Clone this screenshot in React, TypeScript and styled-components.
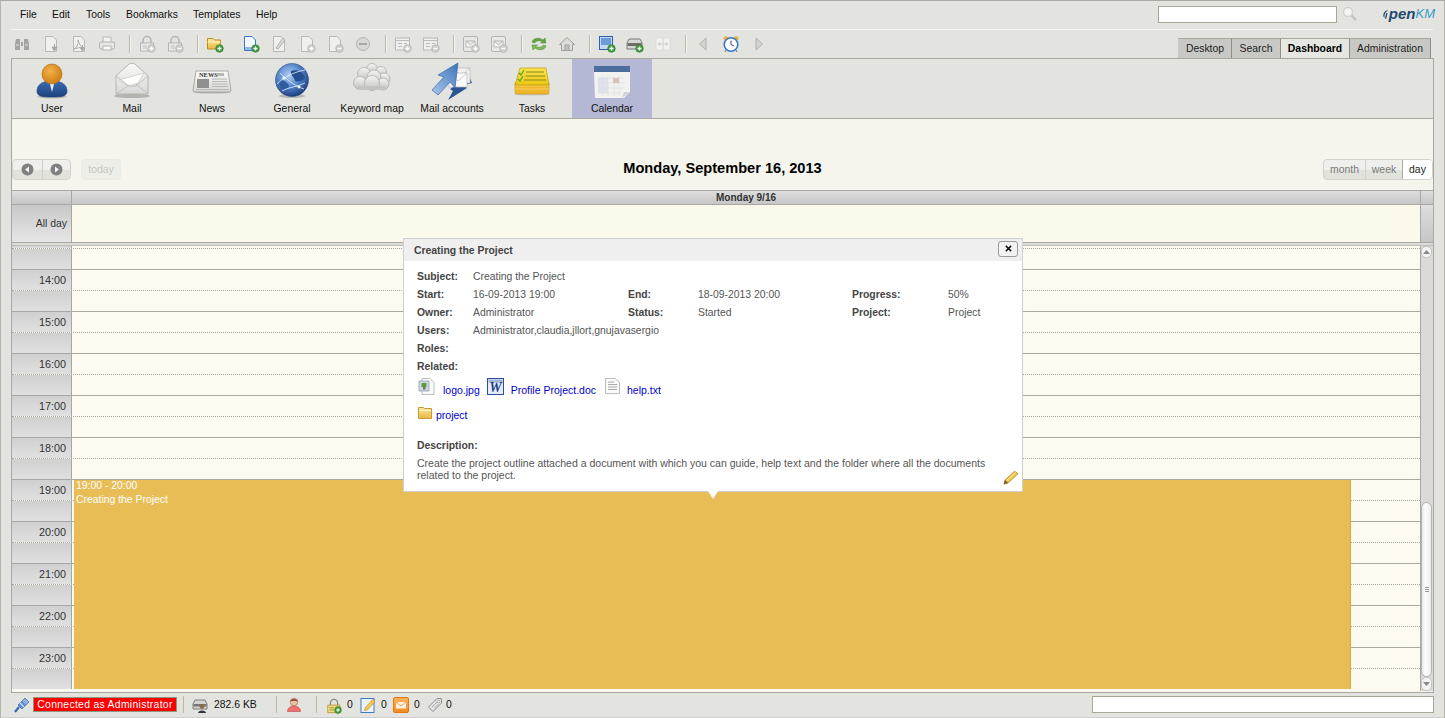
import React from 'react';
import styled, { createGlobalStyle } from 'styled-components';

const GlobalStyle = createGlobalStyle`
  html, body {
    margin: 0;
    padding: 0;
    background: #e3e4df;
    font-family: "Liberation Sans", Arial, sans-serif;
    overflow: hidden;
  }
`;

const Page = styled.div`
  position: relative;
  box-sizing: border-box;
  width: 1445px;
  height: 718px;
  border-top: 1px solid #aaaaa2;
  border-left: 1px solid #b4b4ac;
  border-right: 1px solid #b4b4ac;
  background: #e3e4df;
  display: flex;
  flex-direction: column;
  font-size: 10.4px;
  color: #111;
`;

const MenuBar = styled.div`
  height: 26px;
  padding-bottom: 2px;
  margin: 0 11px 0 10px;
  display: flex;
  align-items: center;
  justify-content: space-between;
  border-bottom: 1px solid #f6f6f2;
  box-sizing: content-box;
`;

const Menus = styled.div`
  display: flex;
  padding-left: 9px;
`;

const MenuItem = styled.span<{ $w: number }>`
  width: ${(p) => p.$w}px;
  color: #111;
`;

const SearchBox = styled.div`
  display: flex;
  align-items: center;
  margin-right: -2px;
`;

const SearchInput = styled.input`
  box-sizing: border-box;
  width: 179px;
  height: 17px;
  margin: 0 5px 0 0;
  padding: 0 3px;
  border: 1px solid #a8a898;
  background: #fff;
`;

const Logo = styled.div`
  display: flex;
  align-items: center;
  width: 52px;
  margin-left: 25px;
  font-style: italic;
  font-weight: bold;
  font-size: 15px;
  line-height: 14px;
  color: #21496f;
`;

const LogoKm = styled.span`
  color: #3d9ac6;
  font-weight: normal;
  font-size: 13px;
`;

const ToolRow = styled.div`
  height: 28px;
  display: flex;
  justify-content: space-between;
  padding: 0 13px 0 7px;
`;

const Tools = styled.div`
  display: flex;
  align-items: center;
  height: 28px;
`;

const Tool = styled.span<{ $ml?: number; $mr?: number }>`
  width: 28px;
  height: 20px;
  display: flex;
  align-items: center;
  justify-content: center;
  margin-left: ${(p) => p.$ml ?? 0}px;
  margin-right: ${(p) => p.$mr ?? 0}px;
`;

const ToolSep = styled.span`
  width: 1px;
  height: 18px;
  margin: 0 3px 0 8px;
  background: #bcb8a8;
  box-shadow: 1px 0 0 #f4f4f0;
`;

const Tabs = styled.div`
  display: flex;
  align-items: flex-end;
  height: 28px;
  margin-bottom: -1px;
`;

const Tab = styled.div<{ $w: number; $on?: boolean }>`
  box-sizing: border-box;
  width: ${(p) => p.$w}px;
  height: 20px;
  display: flex;
  align-items: center;
  justify-content: center;
  border-top: 1px solid #a8a898;
  border-right: 1px solid #8e8e86;
  background: ${(p) => (p.$on ? '#e6e7e2' : '#c8c9c4')};
  font-weight: ${(p) => (p.$on ? 'bold' : 'normal')};
  color: ${(p) => (p.$on ? '#000' : '#222')};
  &:first-child {
    border-left: 1px solid #c8c9c4;
  }
`;

const Panel = styled.div`
  flex: 1;
  min-height: 0;
  margin: 0 10px 0 10px;
  border: 1px solid #a8a99c;
  display: flex;
  flex-direction: column;
`;

const Stack = styled.div`
  height: 59px;
  flex: none;
  display: flex;
  border-bottom: 1px solid #a8a99c;
`;

const StackItem = styled.div<{ $on?: boolean }>`
  width: 80px;
  display: flex;
  flex-direction: column;
  align-items: center;
  padding-top: 2px;
  box-sizing: border-box;
  background: ${(p) => (p.$on ? '#b4b8d4' : 'transparent')};
`;

const StackIcon = styled.span`
  height: 38px;
  display: flex;
  justify-content: center;
`;

const StackLabel = styled.span`
  margin-top: 4px;
  line-height: 12px;
  color: #111;
`;

const CalendarArea = styled.div`
  flex: 1;
  min-height: 0;
  display: flex;
  flex-direction: column;
  padding-top: 40px;
  padding-bottom: 1px;
  background: #f5f5ee;
`;

const CalHead = styled.div`
  height: 21px;
  margin-bottom: 10px;
  display: flex;
  align-items: center;
  justify-content: space-between;
`;

const HeadSide = styled.div`
  width: 140px;
  display: flex;
  align-items: center;
  gap: 10px;
`;

const HeadSideRight = styled(HeadSide)`
  justify-content: flex-end;
`;

const ButtonGroup = styled.div`
  display: flex;
  height: 21px;
  box-sizing: border-box;
  border: 1px solid #d4d4ce;
  border-radius: 4px;
  background: linear-gradient(#efefeb 50%, #e2e2dd 50%);
  overflow: hidden;
`;

const NavButton = styled.span`
  box-sizing: border-box;
  width: 28.5px;
  display: flex;
  align-items: center;
  justify-content: center;
  & + & {
    border-left: 1px solid #cfcfc9;
  }
`;

const ViewButton = styled.span<{ $w: number; $on?: boolean }>`
  box-sizing: border-box;
  width: ${(p) => p.$w}px;
  display: flex;
  align-items: center;
  justify-content: center;
  color: ${(p) => (p.$on ? '#222' : '#7a7a78')};
  background: ${(p) => (p.$on ? '#fff' : 'transparent')};
  border-left: 1px solid ${(p) => (p.$on ? '#a8a8a4' : '#d2d2cc')};
  &:first-child {
    border-left: 0;
  }
`;

const TodayButton = styled.span`
  box-sizing: border-box;
  width: 40px;
  height: 21px;
  display: flex;
  align-items: center;
  justify-content: center;
  border: 1px solid #ebebe5;
  border-radius: 4px;
  background: #eeeee8;
  color: #c6c6bf;
`;

const Title = styled.div`
  font-size: 14.6px;
  font-weight: bold;
  color: #000;
  padding-bottom: 4px;
`;

const Grid = styled.div`
  flex: 1;
  min-height: 0;
  display: flex;
  flex-direction: column;
`;

const cellGradient = 'linear-gradient(#dedede, #c6c6c6)';

const GridHeader = styled.div`
  box-sizing: border-box;
  height: 15px;
  flex: none;
  display: flex;
  border-top: 1px solid #a8a8a2;
  border-bottom: 1px solid #a8a8a2;
  background: ${cellGradient};
`;

const CornerCell = styled.div`
  width: 60px;
  box-sizing: border-box;
  border-right: 1px solid #a8a8a2;
`;

const DayCell = styled.div`
  flex: 1;
  display: flex;
  align-items: center;
  justify-content: center;
  font-size: 10px;
  font-weight: bold;
  color: #333;
`;

const ScrollCorner = styled.div`
  width: 13px;
  box-sizing: border-box;
  border-left: 1px solid #a8a8a2;
`;

const AllDayRow = styled.div`
  height: 37px;
  flex: none;
  display: flex;
`;

const AllDayLabel = styled.div`
  width: 60px;
  box-sizing: border-box;
  padding: 13px 4px 0 0;
  text-align: right;
  border-right: 1px solid #a8a8a2;
  background: linear-gradient(#c8c8c8, #e6e6e6);
  color: #333;
`;

const AllDaySlot = styled.div`
  flex: 1;
  background: #fbf8ec;
`;

const AllDayScroll = styled(ScrollCorner)`
  background: linear-gradient(#dedede, #c6c6c6);
`;

const Divider = styled.div`
  box-sizing: border-box;
  height: 4px;
  flex: none;
  border-top: 1px solid #a8a8a2;
  border-bottom: 1px solid #bdbdb6;
  background: #dcdcd8;
`;

const GridBody = styled.div`
  flex: 1;
  min-height: 0;
  display: flex;
`;

const Rows = styled.div`
  position: relative;
  flex: 1;
  min-width: 0;
  display: flex;
  flex-direction: column;
  overflow: hidden;
  background: #fdfaf2;
`;

const Half = styled.div<{ $h: number; $line?: 'solid' | 'dotted' }>`
  box-sizing: border-box;
  height: ${(p) => p.$h}px;
  flex: none;
  display: flex;
  border-top: ${(p) => (p.$line ? `1px ${p.$line} #a8a8a2` : '0')};
`;

const TimeCell = styled.div`
  width: 60px;
  box-sizing: border-box;
  padding-right: 5px;
  text-align: right;
  line-height: 21px;
  font-size: 10.8px;
  color: #333;
  border-right: 1px solid #a8a8a2;
  background: linear-gradient(#d0d0d0, #e0e0e0);
`;

const EventBlock = styled.div`
  position: absolute;
  left: 62px;
  right: 69px;
  top: 234px;
  height: 209px;
  box-sizing: border-box;
  padding: 0 2px;
  background: #e8bd56;
  border-right: 1px solid #e2aa28;
  color: #fff;
  line-height: 14px;
`;

const EventText = styled.div`
  margin-top: -1px;
`;

const Scrollbar = styled.div`
  width: 13px;
  flex: none;
  box-sizing: border-box;
  padding-right: 1px;
  display: flex;
  flex-direction: column;
  border-left: 1px solid #a8a8a2;
  background: #dcdad8;
`;

const ScrollBtn = styled.div<{ $h: number }>`
  height: ${(p) => p.$h}px;
  flex: none;
  display: flex;
  align-items: center;
  justify-content: center;
  background: #f4f3f2;
  border: 1px solid #c4c3c0;
  border-radius: 5px;
  box-sizing: border-box;
`;

const ScrollTrack = styled.div`
  flex: 1;
`;

const ScrollThumb = styled.div`
  height: 175px;
  flex: none;
  box-sizing: border-box;
  display: flex;
  flex-direction: column;
  align-items: center;
  justify-content: center;
  gap: 1px;
  border: 1px solid #b4b3b0;
  border-radius: 6px;
  background: linear-gradient(90deg, #e9e8e8, #fdfdfd 40%, #eeeded);
`;

const Grip = styled.span`
  width: 4px;
  height: 1px;
  background: #9a9a9a;
`;

const StatusBar = styled.div`
  height: 23px;
  flex: none;
  padding: 0 10px 1px 13px;
  display: flex;
  align-items: center;
  border-bottom: 1px solid #cfcfca;
  box-sizing: content-box;
`;

const StatusIcon = styled.span<{ $ml?: number }>`
  width: 16px;
  height: 16px;
  display: flex;
  margin-left: ${(p) => p.$ml ?? 0}px;
`;

const Connected = styled.span`
  box-sizing: border-box;
  width: 144px;
  height: 15px;
  margin-left: 3px;
  display: flex;
  align-items: center;
  justify-content: center;
  background: #ff0000;
  border: 1px solid #8a9a80;
  color: #fff;
  letter-spacing: 0.3px;
`;

const StatusSep = styled.span<{ $ml: number; $mr: number }>`
  width: 1px;
  height: 17px;
  margin: 0 ${(p) => p.$mr}px 0 ${(p) => p.$ml}px;
  background: #bcb8a8;
`;

const StatusText = styled.span<{ $w: number; $ml: number }>`
  width: ${(p) => p.$w}px;
  margin-left: ${(p) => p.$ml}px;
  color: #111;
`;

const StatusInput = styled.input`
  box-sizing: border-box;
  width: 342px;
  height: 17px;
  margin: 0 0 0 auto;
  border: 1px solid #a8a898;
  background: #fff;
`;

const Popup = styled.div`
  position: absolute;
  left: 402px;
  top: 237px;
  box-sizing: border-box;
  width: 620px;
  height: 254px;
  border: 1px solid #cfcfcf;
  background: #fff;
  color: #555;
  font-size: 10.4px;
  &::after {
    content: '';
    position: absolute;
    left: 304px;
    bottom: -8px;
    border-left: 5px solid transparent;
    border-right: 5px solid transparent;
    border-top: 8px solid #fff;
  }
`;

const PopupHead = styled.div`
  height: 22px;
  display: flex;
  align-items: center;
  justify-content: space-between;
  padding: 0 4px 0 10px;
  background: #efefef;
  font-weight: bold;
  color: #444;
`;

const CloseBtn = styled.span`
  box-sizing: border-box;
  width: 20px;
  height: 16px;
  display: flex;
  align-items: center;
  justify-content: center;
  border: 1px solid #9a9a9a;
  border-radius: 3px;
  background: #f2f2f2;
  margin-top: -3px;
`;

const PopupBody = styled.div`
  position: relative;
  padding: 6px 13px 0 13px;
`;

const Fields = styled.div`
  display: grid;
  grid-template-columns: 56px 155px 70px 154px 96px 1fr;
  grid-auto-rows: 18px;
  align-items: center;
`;

const FieldLabel = styled.span`
  font-weight: bold;
  color: #444;
`;

const FieldValue = styled.span<{ $wide?: boolean }>`
  grid-column: ${(p) => (p.$wide ? '2 / -1' : 'auto')};
`;

const Files = styled.div`
  display: flex;
  align-items: flex-end;
  height: 19px;
  margin-top: 3px;
`;

const FileIcon = styled.span<{ $mr: number; $ml?: number }>`
  display: flex;
  align-self: flex-start;
  margin-right: ${(p) => p.$mr}px;
  margin-left: ${(p) => p.$ml ?? 0}px;
`;

const FileLink = styled.span`
  color: #0000c8;
  line-height: 14px;
  font-size: 10.5px;
`;

const FolderRow = styled.div`
  display: flex;
  align-items: flex-end;
  margin-top: 10px;
  height: 15px;
`;

const DescLabel = styled(FieldLabel)`
  display: block;
  margin-top: 17px;
  line-height: 14px;
`;

const DescText = styled.div`
  margin-top: 4px;
  width: 580px;
  line-height: 12px;
  font-size: 10.53px;
`;

const EditIcon = styled.span`
  position: absolute;
  right: 3px;
  top: 209px;
  display: flex;
`;

const ZeroDefs = styled.svg`
  position: absolute;
  width: 0;
  height: 0;
`;

const Defs = () => (
  <ZeroDefs aria-hidden="true">
    <defs>
      <radialGradient id="head" cx="40%" cy="35%" r="70%">
        <stop offset="0" stopColor="#f2b04a" />
        <stop offset="1" stopColor="#cf7c10" />
      </radialGradient>
      <linearGradient id="suit" x1="0" y1="0" x2="0" y2="1">
        <stop offset="0" stopColor="#3a6cb0" />
        <stop offset="1" stopColor="#1c4280" />
      </linearGradient>
      <linearGradient id="paper" x1="0" y1="0" x2="0" y2="1">
        <stop offset="0" stopColor="#fafafa" />
        <stop offset="1" stopColor="#d8d8d6" />
      </linearGradient>
      <radialGradient id="globe" cx="42%" cy="35%" r="70%">
        <stop offset="0" stopColor="#b4d0f4" />
        <stop offset="0.55" stopColor="#4f80c8" />
        <stop offset="1" stopColor="#16356e" />
      </radialGradient>
      <linearGradient id="cloud" x1="0" y1="0" x2="0" y2="1">
        <stop offset="0" stopColor="#f6f6f6" />
        <stop offset="1" stopColor="#c0c0be" />
      </linearGradient>
      <linearGradient id="arrow" x1="0" y1="1" x2="1" y2="0">
        <stop offset="0" stopColor="#a9c8ec" />
        <stop offset="1" stopColor="#3c74bc" />
      </linearGradient>
      <linearGradient id="note" x1="0" y1="0" x2="0" y2="1">
        <stop offset="0" stopColor="#f8e44c" />
        <stop offset="1" stopColor="#e8c810" />
      </linearGradient>
      <linearGradient id="folder" x1="0" y1="0" x2="0" y2="1">
        <stop offset="0" stopColor="#fbe9a4" />
        <stop offset="1" stopColor="#eab63e" />
      </linearGradient>
      <linearGradient id="orange" x1="0" y1="0" x2="0" y2="1">
        <stop offset="0" stopColor="#fbb45c" />
        <stop offset="1" stopColor="#f08a24" />
      </linearGradient>
    </defs>
  </ZeroDefs>
);

const UserIcon = () => (
  <svg width="40" height="38" viewBox="0 0 40 38">
    <ellipse cx="20" cy="35.5" rx="15" ry="2" fill="#bdbdb8" />
    <path d="M5 30C5 24 10 21 16 20L24 20C30 21 35 24 35 30C35 35 31 36 20 36C9 36 5 35 5 30Z" fill="url(#suit)" stroke="#173a72" strokeWidth="0.6" />
    <path d="M17.5 21L20 31L22.5 21Z" fill="#eef2f8" />
    <circle cx="20" cy="13" r="10" fill="url(#head)" stroke="#b46e10" strokeWidth="0.7" />
  </svg>
);

const MailIcon = () => (
  <svg width="40" height="38" viewBox="0 0 40 38">
    <ellipse cx="20" cy="35" rx="18" ry="2" fill="#b4b4ae" />
    <path d="M4 15L17 3Q20 1.5 23 3L36 15V33H4Z" fill="url(#paper)" stroke="#a8a8a4" strokeWidth="0.8" />
    <path d="M7 19L32 12L26 22L17 25Z" fill="#fff" stroke="#bcbcb8" strokeWidth="0.6" />
    <path d="M4 33L17 24M36 33L24 23M4 15L17 25H24L36 15" fill="none" stroke="#b8b8b4" strokeWidth="0.8" />
  </svg>
);

const NewsIcon = () => (
  <svg width="40" height="38" viewBox="0 0 40 38">
    <ellipse cx="20" cy="31" rx="19" ry="1.6" fill="#b8b8b2" />
    <path d="M4 10H36L39 29Q39 31 37 31H3Q1 31 1 29Z" fill="url(#paper)" stroke="#9a9a96" strokeWidth="0.8" />
    <text x="7" y="16" fontFamily="Liberation Serif, serif" fontWeight="bold" fontSize="6.4" fill="#333">NEWS</text>
    <rect x="25" y="12" width="7" height="3" fill="#b8b8b6" />
    <rect x="5" y="18" width="12" height="9" fill="#909090" />
    <path d="M20 18H35M20 20.5H35M20 23H36M20 25.5H36M4 28.5H37" stroke="#b0b0ae" strokeWidth="0.9" />
  </svg>
);

const GlobeIcon = () => (
  <svg width="40" height="38" viewBox="0 0 40 38">
    <ellipse cx="20" cy="35" rx="13" ry="2" fill="#b8b8b2" />
    <circle cx="20" cy="19" r="16.5" fill="url(#globe)" stroke="#1b3b76" strokeWidth="0.5" />
    <path d="M19 10C25 8 31 11 33 16C31 21 26 21 23 20C23 17 18 14 19 10Z" fill="#24508f" />
    <path d="M7 20C11 18 15 21 17 25C15 30 11 29 8 27Z" fill="#2d5da0" />
    <path d="M5 23C12 16 22 11 33 9M8 12C16 20 25 26 32 28M10 30C16 26 26 26 33 22" fill="none" stroke="#e4effc" strokeWidth="0.8" />
    <circle cx="12" cy="17" r="1.6" fill="#fff" />
    <circle cx="27" cy="26" r="1.4" fill="#fff" />
  </svg>
);

const CloudIcon = () => (
  <svg width="40" height="38" viewBox="0 0 40 38">
    <g fill="url(#cloud)" stroke="#a6a6a4" strokeWidth="0.7">
      <circle cx="20" cy="8" r="5.5" />
      <circle cx="29" cy="11" r="5.5" />
      <circle cx="12" cy="13" r="6.5" />
      <circle cx="32" cy="18" r="6" />
      <circle cx="22" cy="16" r="7" />
      <circle cx="8" cy="22" r="6.5" />
      <circle cx="31" cy="23" r="6" />
      <circle cx="20" cy="22" r="7.5" />
    </g>
    <rect x="6" y="25" width="27" height="4" fill="#c4c4c2" />
  </svg>
);

const MailAccountsIcon = () => (
  <svg width="40" height="40" viewBox="0 0 40 40">
    <path d="M37 15L40 22L32 24L35 27L16 39L21 30L18 28Z" fill="#2c5692" />
    <rect x="20" y="7" width="18" height="15" fill="#f2f2f0" stroke="#b4b4b4" strokeWidth="0.7" />
    <path d="M20 7L29 15L38 7" fill="none" stroke="#c0c0c0" strokeWidth="0.8" />
    <rect x="17" y="12" width="18" height="14" fill="#fafafa" stroke="#b4b4b4" strokeWidth="0.7" />
    <path d="M17 12L26 20L35 12" fill="none" stroke="#c0c0c0" strokeWidth="0.8" />
    <path d="M26 2L23 27L18 21L6 34L0 29L12 16L6 14Z" fill="url(#arrow)" stroke="#39689f" strokeWidth="0.7" />
  </svg>
);

const TasksIcon = () => (
  <svg width="40" height="38" viewBox="0 0 40 38">
    <ellipse cx="20" cy="33" rx="18" ry="1.6" fill="#c8c8c0" />
    <path d="M3 22H37V31Q37 33 35 33H5Q3 33 3 31Z" fill="#efb72c" stroke="#c89414" strokeWidth="0.6" />
    <path d="M3 25H37M3 28H37" stroke="#fbd76a" strokeWidth="0.8" />
    <path d="M8 7H34L37 24H3Z" fill="url(#note)" stroke="#bc9a10" strokeWidth="0.7" />
    <path d="M14 11H32M13.5 15H33M12 19H34" stroke="#8e8420" strokeWidth="1" />
    <path d="M7 12L9 14L12 9M6 18L8 20L11 15" fill="none" stroke="#5ca02c" strokeWidth="1.2" />
  </svg>
);

const CalendarIcon = () => (
  <svg width="38" height="38" viewBox="0 -4 38 38">
    <path d="M1 7H37V27L31 33H2Z" fill="#f2f2f0" />
    <rect x="1" y="1" width="36" height="6" fill="#4c6c9c" />
    <path d="M5 13H32M5 18H32M5 23H32M5 28H28M10 11V31M15 11V31M21 11V31M26 11V31" stroke="#e0e0e2" strokeWidth="0.8" />
    <rect x="5" y="13" width="10" height="15" fill="#d5dbe8" opacity="0.7" />
    <rect x="20" y="13" width="6" height="5" fill="#d8c2bc" />
    <path d="M37 27L29 33L31 27Z" fill="#d2d2ce" />
  </svg>
);

type BadgeKind = 'add' | 'plus' | 'minus';

const Badge = ({ kind }: { kind: BadgeKind }) => (
  <g>
    <circle cx="13.5" cy="13.5" r="3.8" fill={kind === 'add' ? '#3f9c3c' : '#d0d0ce'} stroke={kind === 'add' ? '#2c7a2c' : '#a8a8a6'} strokeWidth="0.6" />
    <path d={kind === 'minus' ? 'M11.5 13.5H15.5' : 'M11.5 13.5H15.5M13.5 11.5V15.5'} stroke="#fff" strokeWidth="1.3" />
  </g>
);

const Ico = ({ children, size = 18 }: { children: React.ReactNode; size?: number }) => (
  <svg width={size} height={size} viewBox="0 0 18 18">{children}</svg>
);

const GrayDoc = () => <path d="M3.5 1.5H11L14.5 5V16.5H3.5Z" fill="#f0f0ee" stroke="#b8b8b6" />;

const GrayLock = () => (
  <g>
    <path d="M5 8V5.5A4 4 0 0 1 13 5.5V8" fill="none" stroke="#b4b4b2" strokeWidth="1.5" />
    <rect x="2.5" y="8" width="13" height="8" fill="#ececea" stroke="#b4b4b2" />
    <path d="M4.5 11H9M4.5 13H9" stroke="#bcbcba" />
  </g>
);

const GrayForm = () => (
  <g>
    <rect x="1.5" y="3" width="14" height="12" fill="#efefed" stroke="#b8b8b6" />
    <path d="M1.5 5.5H15.5M4 8.5H8M10 8.5H13M4 11.5H8" stroke="#bcbcba" />
  </g>
);

const GrayMail = () => (
  <g>
    <rect x="1.5" y="1.5" width="14" height="15" rx="1.5" fill="#e8e8e6" stroke="#b4b4b2" />
    <path d="M4 6H13V12H4ZM4 6L8.5 10L13 6" fill="#f8f8f6" stroke="#b8b8b6" />
  </g>
);

const toolIcons: React.ReactNode[] = [
  <Ico key="find"><path d="M2 9L3 4H7V15H2ZM11 4H15L16 9V15H11ZM8 7H10V11H8Z" fill="#a4a4a0" /><path d="M3 10H6M12 10H15" stroke="#e4e4e0" /></Ico>,
  <Ico key="down"><GrayDoc /><path d="M12.5 9V14M10 12L12.5 16L15 12Z" fill="#b0b0ae" stroke="#a8a8a6" /></Ico>,
  <Ico key="pdf"><GrayDoc /><path d="M4 14C7 12 9 8 8 5C9 9 11 12 14 13C10 12 7 13 4 14Z" fill="none" stroke="#aaa" /><path d="M12.5 10V14M10.5 13L12.5 16L14.5 13Z" fill="#b0b0ae" stroke="#a8a8a6" /></Ico>,
  <Ico key="print"><path d="M5 7V2H13V7" fill="#f4f4f2" stroke="#b4b4b2" /><rect x="1.5" y="7" width="15" height="7" rx="1.5" fill="#e6e6e4" stroke="#b0b0ae" /><rect x="5" y="11" width="8" height="4" fill="#f8f8f6" stroke="#b4b4b2" /></Ico>,
  'sep',
  <Ico key="lockadd"><GrayLock /><Badge kind="plus" /></Ico>,
  <Ico key="lockrem"><GrayLock /><Badge kind="minus" /></Ico>,
  'sep',
  <Ico key="folder"><path d="M1.5 3.5H7L8.5 5H14.5V14H1.5Z" fill="url(#folder)" stroke="#bc8a1c" /><path d="M1.5 7H14.5" stroke="#fdf3c6" /><Badge kind="add" /></Ico>,
  <Ico key="docadd"><path d="M2.5 1.5H10L13.5 5V15.5H2.5Z" fill="#f4f8fe" stroke="#3c78cc" /><path d="M3 12H13V15H3Z" fill="#8fb8ec" /><Badge kind="add" /></Ico>,
  <Ico key="edit"><GrayDoc /><path d="M6 13L13 3L15 5L8 14Z" fill="#dcdcda" stroke="#b0b0ae" /></Ico>,
  <Ico key="docplus"><GrayDoc /><Badge kind="plus" /></Ico>,
  <Ico key="docrem"><GrayDoc /><Badge kind="minus" /></Ico>,
  <Ico key="minus"><circle cx="9" cy="9" r="6.5" fill="#d8d8d6" stroke="#b4b4b2" /><rect x="5" y="8" width="8" height="2" fill="#a6a6a4" /></Ico>,
  'sep',
  <Ico key="formadd"><GrayForm /><Badge kind="plus" /></Ico>,
  <Ico key="formrem"><GrayForm /><Badge kind="minus" /></Ico>,
  'sep',
  <Ico key="mailadd"><GrayMail /><Badge kind="plus" /></Ico>,
  <Ico key="mailrem"><GrayMail /><Badge kind="minus" /></Ico>,
  'sep',
  <Ico key="refresh"><path d="M2 7C3 3 9 2 13 5L15 3L16 8H10.5L12.5 6.5C9.5 5 6 5.5 4.5 8Z" fill="#62a83c" stroke="#44842a" strokeWidth="0.5" /><path d="M16 11C15 15 9 16 5 13L3 15L2 10H7.5L5.5 11.5C8.5 13 12 12.5 13.5 10Z" fill="#7cbc54" stroke="#44842a" strokeWidth="0.5" /></Ico>,
  <Ico key="home"><path d="M1.5 9.5L9 2.5L16.5 9.5H14.5V15.5H3.5V9.5Z" fill="#dcdcda" stroke="#a0a09e" /><path d="M7 15V10H11V15" fill="#c0c0be" stroke="#a0a09e" /></Ico>,
  'sep',
  <Ico key="win"><rect x="1.5" y="1.5" width="13" height="13" fill="#c6d8f0" stroke="#2c60a8" /><rect x="3" y="3" width="10" height="7" fill="#6c9cd8" /><Badge kind="add" /></Ico>,
  <Ico key="scan"><path d="M3 4H14L16 8V14H1V8Z" fill="#d6d6d4" stroke="#7c7c7a" /><rect x="1.5" y="8" width="14" height="3" fill="#6e6e6c" /><Badge kind="add" /></Ico>,
  <Ico key="resize"><rect x="2" y="3" width="14" height="12" fill="#f2f2f0" stroke="#dcdcda" /><path d="M9 3V15M4 9H14M4 9L6 7.5V10.5ZM14 9L12 7.5V10.5Z" stroke="#d2d2d0" fill="#d2d2d0" /></Ico>,
  'sep',
  <Ico key="prev"><path d="M12 3V15L5.5 9Z" fill="#d4d4d2" stroke="#b0b0ae" /></Ico>,
  <Ico key="clock"><circle cx="3.8" cy="3.6" r="2.4" fill="#f0b040" /><circle cx="14.2" cy="3.6" r="2.4" fill="#f0b040" /><circle cx="9" cy="9.5" r="6.8" fill="#ffffff" stroke="#3478c4" strokeWidth="1.6" /><path d="M9 5.5V9.5L12 11" fill="none" stroke="#446" strokeWidth="1" /><path d="M4 15L3 17M14 15L15 17" stroke="#777" /></Ico>,
  <Ico key="next"><path d="M6 3V15L12.5 9Z" fill="#d4d4d2" stroke="#b0b0ae" /></Ico>,
];

const Magnifier = () => (
  <svg width="16" height="16" viewBox="0 0 16 16">
    <circle cx="6" cy="6" r="4.5" fill="#f4f4f2" stroke="#d0d0ce" strokeWidth="1.4" />
    <path d="M9.5 9.5L14 14" stroke="#c4c4c2" strokeWidth="2.4" />
  </svg>
);

const LogoMark = () => (
  <svg width="9" height="15" viewBox="0 0 9 15">
    <path d="M8 1C4 1 1 4 0.5 8C0.2 10.5 1 12 2.5 12.5C1.8 9 3 4 8 1Z" fill="#21496f" />
    <path d="M7 5L5 14H3L5 5Z" fill="#21496f" />
  </svg>
);

const CircleNav = ({ dir }: { dir: 'prev' | 'next' }) => (
  <svg width="13" height="13" viewBox="0 0 13 13">
    <circle cx="6.5" cy="6.5" r="6" fill="#808080" />
    <path d={dir === 'prev' ? 'M8 3.5V9.5L4 6.5Z' : 'M5 3.5V9.5L9 6.5Z'} fill="#f4f4f4" />
  </svg>
);

const ArrowTiny = ({ up }: { up?: boolean }) => (
  <svg width="7" height="4" viewBox="0 0 7 4">
    <path d={up ? 'M0 4L3.5 0L7 4Z' : 'M0 0L3.5 4L7 0Z'} fill="#888" />
  </svg>
);

const CloseIcon = () => (
  <svg width="7" height="7" viewBox="0 0 8 8">
    <path d="M1 1L7 7M7 1L1 7" stroke="#111" strokeWidth="1.7" />
  </svg>
);

const PlugIcon = () => (
  <svg width="16" height="16" viewBox="0 0 16 16">
    <path d="M1 15L5 10" stroke="#3c68b0" strokeWidth="2.2" />
    <path d="M4 8L8 12L12 8L8 4Z" fill="#5c8cd0" stroke="#2f5a9c" strokeWidth="0.6" />
    <path d="M8 4L11 1L15 5L12 8" fill="#8cb0e0" stroke="#2f5a9c" strokeWidth="0.6" />
    <path d="M6 6L10 10" stroke="#cfe0f4" strokeWidth="1.2" />
  </svg>
);

const DiskUserIcon = () => (
  <svg width="16" height="16" viewBox="0 0 16 16">
    <path d="M3 3H13L15 7V12H1V7Z" fill="#d4d4d2" stroke="#7c7c7a" />
    <rect x="1.5" y="7" width="13" height="2.5" fill="#777" />
    <circle cx="10" cy="9.5" r="2.3" fill="#8a6a48" />
    <path d="M6 16C6 12.5 14 12.5 14 16Z" fill="#33373c" />
  </svg>
);

const RedUserIcon = () => (
  <svg width="16" height="16" viewBox="0 0 16 16">
    <circle cx="8" cy="5" r="3.8" fill="#eec0a0" stroke="#a8664c" strokeWidth="0.6" />
    <path d="M4.2 4.5C4.5 1 11.5 1 11.8 4.5C9 3.5 7 3.5 4.2 4.5Z" fill="#7c4a30" />
    <path d="M1.5 14.5C1.5 10.5 5 9 8 9C11 9 14.5 10.5 14.5 14.5Z" fill="#f07070" stroke="#c04848" strokeWidth="0.6" />
  </svg>
);

const LockAddIcon = () => (
  <svg width="16" height="18" viewBox="0 0 18 18">
    <path d="M5 8V5.5A4 4 0 0 1 13 5.5V8" fill="none" stroke="#8a8a84" strokeWidth="1.5" />
    <rect x="2" y="8" width="13.5" height="8.5" fill="#f4dc84" stroke="#b89830" />
    <path d="M4 11H9M4 13.5H9" stroke="#a08428" />
    <Badge kind="add" />
  </svg>
);

const NoteIcon = () => (
  <svg width="16" height="16" viewBox="0 0 16 16">
    <rect x="1" y="1.5" width="13" height="14" fill="#eaf3fc" stroke="#3c7cc4" />
    <path d="M5 11L12.5 2.5L15 4.5L7.5 13L4.5 13.5Z" fill="#f4c850" stroke="#c08c20" strokeWidth="0.6" />
  </svg>
);

const OrangeMailIcon = () => (
  <svg width="16" height="16" viewBox="0 0 16 16">
    <rect x="0.5" y="0.5" width="15" height="15" rx="1.5" fill="url(#orange)" stroke="#e07818" />
    <path d="M3 5H13V11.5H3Z" fill="#fdf0dc" />
    <path d="M3 5L8 9L13 5" fill="none" stroke="#f0a050" />
  </svg>
);

const TagIcon = () => (
  <svg width="16" height="16" viewBox="0 0 16 16">
    <path d="M1.5 10L10 1.5L14.5 1.5V6L6 14.5Z" fill="#e4e4e2" stroke="#8e8e8c" />
    <circle cx="11.5" cy="4.5" r="1.3" fill="#fff" stroke="#8e8e8c" strokeWidth="0.7" />
    <path d="M5 10L10 5M7 11.5L11.5 7" stroke="#a8a8a6" />
  </svg>
);

const ImageFileIcon = () => (
  <svg width="17" height="17" viewBox="0 0 17 17">
    <path d="M4 0.5H12L16 4.5V16.5H4Z" fill="#fafafa" stroke="#bdbdbb" />
    <rect x="1" y="3" width="10" height="10" fill="#cfd8e4" stroke="#8898a8" strokeWidth="0.7" />
    <rect x="3.5" y="5" width="5" height="4" fill="#5c9a3c" />
    <rect x="5" y="9" width="2.5" height="2.5" fill="#6c7a4c" />
  </svg>
);

const WordIcon = () => (
  <svg width="17" height="17" viewBox="0 0 17 17">
    <rect x="0.5" y="0.5" width="16" height="16" fill="#e4ecf8" stroke="#2c4e9c" />
    <rect x="1.5" y="1.5" width="14" height="3" fill="#2c4e9c" opacity="0.35" />
    <text x="8.5" y="13.5" textAnchor="middle" fontFamily="Liberation Serif, serif" fontWeight="bold" fontStyle="italic" fontSize="14" fill="#1c3e8c">W</text>
  </svg>
);

const TextFileIcon = () => (
  <svg width="15" height="16" viewBox="0 0 15 16">
    <path d="M0.5 0.5H10L14.5 4.5V15.5H0.5Z" fill="#fafafa" stroke="#bdbdbb" />
    <path d="M3 4H9M3 6.5H12M3 9H12M3 11.5H12" stroke="#a8a8a6" />
  </svg>
);

const FolderIcon = () => (
  <svg width="14" height="12" viewBox="0 0 14 12">
    <path d="M0.5 0.5H5.5L6.5 1.5H13.5V11.5H0.5Z" fill="url(#folder)" stroke="#c89a34" />
    <path d="M1 3.5H13" stroke="#fff4c8" />
  </svg>
);

const PencilIcon = () => (
  <svg width="16" height="15" viewBox="0 0 16 15">
    <path d="M1 14L2 10L11.5 1.2L15 3.8L5 13Z" fill="#f4c850" stroke="#b07c20" strokeWidth="0.8" />
    <path d="M1 14L2 10L5 13Z" fill="#7c5428" />
    <path d="M3.5 10.5L12.5 2.5" stroke="#fce8a0" />
  </svg>
);

const menus: [string, number][] = [
  ['File', 32],
  ['Edit', 34],
  ['Tools', 40],
  ['Bookmarks', 67],
  ['Templates', 63],
  ['Help', 40],
];

const stackItems: [string, React.ReactNode][] = [
  ['User', <UserIcon key="u" />],
  ['Mail', <MailIcon key="m" />],
  ['News', <NewsIcon key="n" />],
  ['General', <GlobeIcon key="g" />],
  ['Keyword map', <CloudIcon key="k" />],
  ['Mail accounts', <MailAccountsIcon key="a" />],
  ['Tasks', <TasksIcon key="t" />],
  ['Calendar', <CalendarIcon key="c" />],
];

const hours = [14, 15, 16, 17, 18, 19, 20, 21, 22, 23];

const App: React.FC = () => {
  return (
    <Page>
      <GlobalStyle />
      <Defs />
      <MenuBar>
        <Menus>
          {menus.map(([name, w]) => (
            <MenuItem key={name} $w={w}>{name}</MenuItem>
          ))}
        </Menus>
        <SearchBox>
          <SearchInput />
          <Magnifier />
          <Logo>
            <LogoMark />
            pen<LogoKm>KM</LogoKm>
          </Logo>
        </SearchBox>
      </MenuBar>

      <ToolRow>
        <Tools>
          {toolIcons.map((icon, i) => {
            if (icon === 'sep') return <ToolSep key={i} />;
            if (i === 0) return <Tool key={i} $mr={1}>{icon}</Tool>;
            if (i === 9) return <Tool key={i} $ml={8}>{icon}</Tool>;
            if (i === 27) return <Tool key={i} $ml={-5} $mr={5}>{icon}</Tool>;
            return <Tool key={i}>{icon}</Tool>;
          })}
        </Tools>
        <Tabs>
          <Tab $w={54}>Desktop</Tab>
          <Tab $w={49}>Search</Tab>
          <Tab $w={69} $on>Dashboard</Tab>
          <Tab $w={81}>Administration</Tab>
        </Tabs>
      </ToolRow>

      <Panel>
        <Stack>
          {stackItems.map(([name, icon]) => (
            <StackItem key={name} $on={name === 'Calendar'}>
              <StackIcon>{icon}</StackIcon>
              <StackLabel>{name}</StackLabel>
            </StackItem>
          ))}
        </Stack>
        <CalendarArea>
          <CalHead>
            <HeadSide>
              <ButtonGroup>
                <NavButton><CircleNav dir="prev" /></NavButton>
                <NavButton><CircleNav dir="next" /></NavButton>
              </ButtonGroup>
              <TodayButton>today</TodayButton>
            </HeadSide>
            <Title>Monday, September 16, 2013</Title>
            <HeadSideRight>
              <ButtonGroup>
                <ViewButton $w={41}>month</ViewButton>
                <ViewButton $w={37}>week</ViewButton>
                <ViewButton $w={30} $on>day</ViewButton>
              </ButtonGroup>
            </HeadSideRight>
          </CalHead>
          <Grid>
            <GridHeader>
              <CornerCell />
              <DayCell>Monday 9/16</DayCell>
              <ScrollCorner />
            </GridHeader>
            <AllDayRow>
              <AllDayLabel>All day</AllDayLabel>
              <AllDaySlot />
              <AllDayScroll />
            </AllDayRow>
            <Divider />
            <GridBody>
              <Rows>
                <Half $h={2}><TimeCell /></Half>
                <Half $h={21} $line="dotted"><TimeCell /></Half>
                {hours.map((h) => (
                  <React.Fragment key={h}>
                    <Half $h={21} $line="solid"><TimeCell>{h}:00</TimeCell></Half>
                    <Half $h={21} $line="dotted"><TimeCell /></Half>
                  </React.Fragment>
                ))}
                <EventBlock>
                  <EventText>
                    19:00 - 20:00
                    <br />
                    Creating the Project
                  </EventText>
                </EventBlock>
              </Rows>
              <Scrollbar>
                <ScrollBtn $h={12}><ArrowTiny up /></ScrollBtn>
                <ScrollTrack />
                <ScrollThumb>
                  <Grip /><Grip /><Grip />
                </ScrollThumb>
                <ScrollBtn $h={14}><ArrowTiny /></ScrollBtn>
              </Scrollbar>
            </GridBody>
          </Grid>
        </CalendarArea>
      </Panel>

      <StatusBar>
        <PlugIcon />
        <Connected>Connected as Administrator</Connected>
        <StatusSep $ml={6} $mr={8} />
        <StatusIcon><DiskUserIcon /></StatusIcon>
        <StatusText $w={44} $ml={6}>282.6 KB</StatusText>
        <StatusSep $ml={18} $mr={9} />
        <StatusIcon><RedUserIcon /></StatusIcon>
        <StatusSep $ml={14} $mr={9} />
        <StatusIcon><LockAddIcon /></StatusIcon>
        <StatusText $w={7} $ml={5}>0</StatusText>
        <StatusIcon $ml={6}><NoteIcon /></StatusIcon>
        <StatusText $w={7} $ml={5}>0</StatusText>
        <StatusIcon $ml={5}><OrangeMailIcon /></StatusIcon>
        <StatusText $w={7} $ml={5}>0</StatusText>
        <StatusIcon $ml={6}><TagIcon /></StatusIcon>
        <StatusText $w={7} $ml={3}>0</StatusText>
        <StatusInput />
      </StatusBar>

      <Popup>
        <PopupHead>
          Creating the Project
          <CloseBtn><CloseIcon /></CloseBtn>
        </PopupHead>
        <PopupBody>
          <Fields>
            <FieldLabel>Subject:</FieldLabel>
            <FieldValue $wide>Creating the Project</FieldValue>
            <FieldLabel>Start:</FieldLabel>
            <FieldValue>16-09-2013 19:00</FieldValue>
            <FieldLabel>End:</FieldLabel>
            <FieldValue>18-09-2013 20:00</FieldValue>
            <FieldLabel>Progress:</FieldLabel>
            <FieldValue>50%</FieldValue>
            <FieldLabel>Owner:</FieldLabel>
            <FieldValue>Administrator</FieldValue>
            <FieldLabel>Status:</FieldLabel>
            <FieldValue>Started</FieldValue>
            <FieldLabel>Project:</FieldLabel>
            <FieldValue>Project</FieldValue>
            <FieldLabel>Users:</FieldLabel>
            <FieldValue $wide>Administrator,claudia,jllort,gnujavasergio</FieldValue>
            <FieldLabel>Roles:</FieldLabel>
            <FieldValue $wide />
            <FieldLabel>Related:</FieldLabel>
            <FieldValue $wide />
          </Fields>
          <Files>
            <FileIcon $mr={8} $ml={1}><ImageFileIcon /></FileIcon>
            <FileLink>logo.jpg</FileLink>
            <FileIcon $mr={7} $ml={7}><WordIcon /></FileIcon>
            <FileLink>Profile Project.doc</FileLink>
            <FileIcon $mr={7} $ml={9}><TextFileIcon /></FileIcon>
            <FileLink>help.txt</FileLink>
          </Files>
          <FolderRow>
            <FileIcon $mr={4} $ml={1}><FolderIcon /></FileIcon>
            <FileLink>project</FileLink>
          </FolderRow>
          <DescLabel>Description:</DescLabel>
          <DescText>
            Create the project outline attached a document with which you can guide, help text and the folder where all the documents related to the project.
          </DescText>
          <EditIcon><PencilIcon /></EditIcon>
        </PopupBody>
      </Popup>
    </Page>
  );
};

export default App;
